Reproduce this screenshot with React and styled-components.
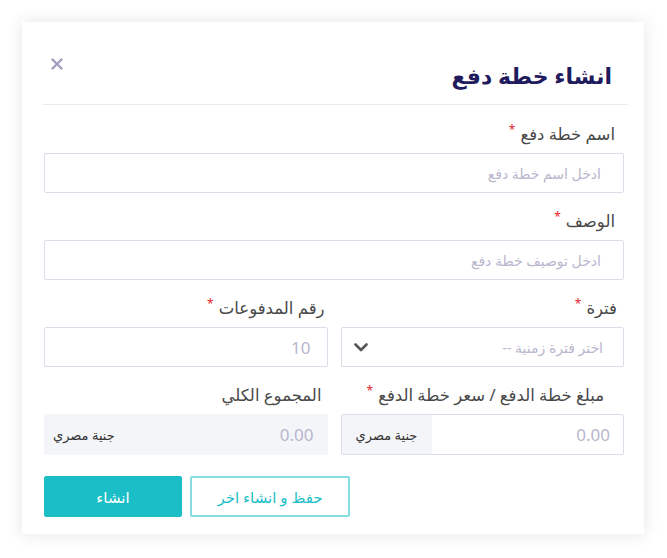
import React from "react";
import styled, { createGlobalStyle } from "styled-components";

const Global = createGlobalStyle`
  html, body { margin: 0; padding: 0; background: #ffffff; }
  body { font-family: "Noto Sans", "DejaVu Sans", sans-serif; }
  * { box-sizing: border-box; }
`;

const Page = styled.div`
  padding: 22px 23px 24px 22px;
`;

const Card = styled.div`
  direction: rtl;
  width: 622px;
  height: 512px;
  background: #fff;
  box-shadow: 0 0 16px rgba(40, 40, 70, 0.12);
`;

const Header = styled.div`
  display: flex;
  justify-content: space-between;
  align-items: flex-start;
  margin: 0 16px 0 21px;
  padding: 30px 16px 16px 2px;
  border-bottom: 1px solid #e9e9ef;
`;

const Title = styled.h2`
  margin: 10px 0 0;
  font-size: 22px;
  line-height: 26px;
  font-weight: 700;
  color: #1f1b5c;
`;

const CloseBtn = styled.button`
  width: 24px;
  height: 24px;
  padding: 0;
  border: 0;
  background: transparent;
  display: flex;
  align-items: center;
  justify-content: center;
  cursor: pointer;
`;

const Body = styled.div`
  padding: 17px 20px 0 22px;
`;

const Grid = styled.div`
  display: grid;
  grid-template-columns: minmax(0, 1fr) minmax(0, 1fr);
  column-gap: 13px;
`;

const Field = styled.div`
  display: flex;
  flex-direction: column;
  min-width: 0;
  margin-bottom: 16px;
`;

const Label = styled.label`
  font-size: 16.5px;
  line-height: 24px;
  color: #484848;
  padding: 0 ${(p) => (p.$pad ? p.$pad : 9)}px;
  margin-bottom: 7px;
`;

const Star = styled.span`
  color: #e3262b;
  font-size: 12px;
  vertical-align: super;
  line-height: 0;
  margin-right: 5px;
`;

const Input = styled.input`
  height: 40px;
  width: 100%;
  border: 1px solid #dddce8;
  border-radius: 2px;
  background: #fff;
  padding: 0 ${(p) => (p.$num ? "16px" : "22px")};
  font-family: inherit;
  font-size: ${(p) => (p.$num ? "17px" : "14px")};
  color: #333;
  direction: rtl;
  outline: none;
  &::placeholder { color: #b9b6cd; }
`;

const SelectBox = styled.div`
  height: 40px;
  border: 1px solid #dddce8;
  border-radius: 2px;
  display: flex;
  align-items: center;
  justify-content: space-between;
  padding: 0 20px 0 12px;
  font-size: 14px;
  color: #b9b6cd;
`;

const Group = styled.div`
  height: 41px;
  display: flex;
  border: 1px solid ${(p) => (p.$disabled ? "#f3f5f9" : "#dddce8")};
  background: ${(p) => (p.$disabled ? "#f3f5f9" : "#fff")};
  border-radius: 2px;
  overflow: hidden;
`;

const GroupInput = styled.input`
  flex: 1;
  min-width: 0;
  border: 0;
  background: transparent;
  padding: 0 13px;
  font-family: inherit;
  font-size: 17px;
  direction: rtl;
  outline: none;
  &::placeholder { color: #b9b6cd; }
`;

const Addon = styled.div`
  width: ${(p) => (p.$wide ? "90px" : "auto")};
  padding: 0 ${(p) => (p.$wide ? "0" : "8px")};
  background: #f3f5f9;
  display: flex;
  align-items: center;
  justify-content: center;
  font-size: 13px;
  color: #333;
  white-space: nowrap;
`;

const Actions = styled.div`
  display: flex;
  justify-content: flex-end;
  gap: 8px;
  margin-top: 5px;
`;

const Button = styled.button`
  height: 41px;
  width: ${(p) => p.$w}px;
  border-radius: 2px;
  font-family: inherit;
  font-size: 15px;
  cursor: pointer;
  border: ${(p) => (p.$primary ? "1px solid #1bbec6" : "2px solid #86dce1")};
  background: ${(p) => (p.$primary ? "#1bbec6" : "#fff")};
  color: ${(p) => (p.$primary ? "#fff" : "#1bbec6")};
`;

const XIcon = () => (
  <svg width="12" height="12" viewBox="0 0 12 12">
    <path d="M1.5 1.5 L10.5 10.5 M10.5 1.5 L1.5 10.5" stroke="#a09dbf" strokeWidth="2.4" strokeLinecap="round" />
  </svg>
);

const Chevron = () => (
  <svg width="14" height="9" viewBox="0 0 14 9">
    <path d="M1.5 1.5 L7 7 L12.5 1.5" stroke="#555" strokeWidth="2.6" fill="none" strokeLinecap="round" strokeLinejoin="round" />
  </svg>
);

export default function App() {
  return (
    <>
      <Global />
      <Page>
        <Card>
          <Header>
            <Title>انشاء خطة دفع</Title>
            <CloseBtn aria-label="close"><XIcon /></CloseBtn>
          </Header>
          <Body>
            <Field>
              <Label>اسم خطة دفع<Star>*</Star></Label>
              <Input placeholder="ادخل اسم خطة دفع" />
            </Field>
            <Field>
              <Label>الوصف<Star>*</Star></Label>
              <Input placeholder="ادخل توصيف خطة دفع" />
            </Field>
            <Grid>
              <Field>
                <Label $pad={7}>فترة<Star>*</Star></Label>
                <SelectBox>
                  <span>اختر فترة زمنية --</span>
                  <Chevron />
                </SelectBox>
              </Field>
              <Field>
                <Label $pad={3}>رقم المدفوعات<Star>*</Star></Label>
                <Input $num placeholder="10" />
              </Field>
              <Field>
                <Label $pad={20}>مبلغ خطة الدفع / سعر خطة الدفع<Star>*</Star></Label>
                <Group>
                  <GroupInput placeholder="0.00" />
                  <Addon $wide>جنية مصري</Addon>
                </Group>
              </Field>
              <Field>
                <Label $pad={6}>المجموع الكلي</Label>
                <Group $disabled>
                  <GroupInput placeholder="0.00" disabled />
                  <Addon>جنية مصري</Addon>
                </Group>
              </Field>
            </Grid>
            <Actions>
              <Button $w={160}>حفظ و انشاء اخر</Button>
              <Button $w={138} $primary>انشاء</Button>
            </Actions>
          </Body>
        </Card>
      </Page>
    </>
  );
}
